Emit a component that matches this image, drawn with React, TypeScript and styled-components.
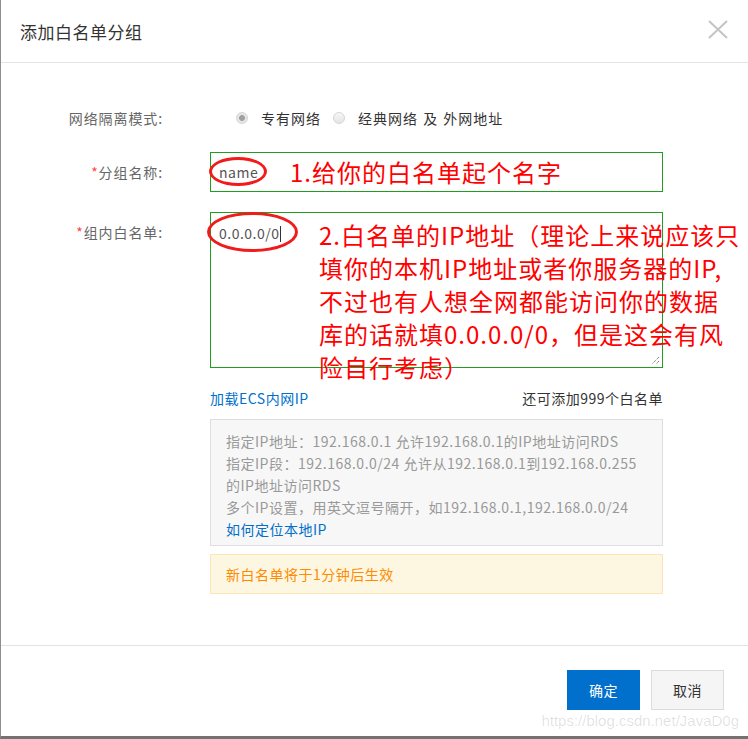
import React from 'react';
import styled, { createGlobalStyle } from 'styled-components';

const GlobalStyle = createGlobalStyle`
  html, body {
    margin: 0;
    padding: 0;
    background: #fff;
  }
  body {
    font-family: "Noto Sans CJK SC", "Noto Sans", sans-serif;
    color: #333;
  }
`;

const noteLines = [
  '2.白名单的IP地址（理论上来说应该只',
  '填你的本机IP地址或者你服务器的IP,',
  '不过也有人想全网都能访问你的数据',
  '库的话就填0.0.0.0/0，但是这会有风',
  '险自行考虑）',
];

const tips = [
  '指定IP地址：192.168.0.1 允许192.168.0.1的IP地址访问RDS',
  '指定IP段：192.168.0.0/24 允许从192.168.0.1到192.168.0.255',
  '的IP地址访问RDS',
  '多个IP设置，用英文逗号隔开，如192.168.0.1,192.168.0.0/24',
];

function App() {
  return (
    <>
      <GlobalStyle />
      <Dialog>
        <Header>
          <Title>添加白名单分组</Title>
          <Close aria-label="close">
            <svg width="20" height="19" viewBox="0 0 20 19">
              <path d="M1 1 L19 18 M19 1 L1 18" stroke="#c4c4c4" strokeWidth="2" fill="none" />
            </svg>
          </Close>
        </Header>

        <Body>
          <FormItem $top={44}>
            <Label $lh={22}>网络隔离模式:</Label>
            <RadioGroup>
              <RadioOption>
                <Radio $checked />
                <span>专有网络</span>
              </RadioOption>
              <RadioOption>
                <Radio />
                <span>经典网络 及 外网地址</span>
              </RadioOption>
            </RadioGroup>
          </FormItem>

          <FormItem $top={23}>
            <Label $lh={40}>
              <Star>*</Star>分组名称:
            </Label>
            <Control>
              <Input>name</Input>
              <Ring $left={-1} $top={5} $w={58} $h={29} />
              <Note $left={80} $top={3}>1.给你的白名单起个名字</Note>
            </Control>
          </FormItem>

          <FormItem $top={20}>
            <Label $lh={40}>
              <Star>*</Star>组内白名单:
            </Label>
            <Control>
              <TextArea>
                0.0.0.0/0<Caret />
                <Grip width="10" height="10" viewBox="0 0 10 10">
                  <path d="M9 2 L2 9 M9 6 L6 9" stroke="#555" strokeWidth="1" strokeDasharray="1 1" fill="none" />
                </Grip>
              </TextArea>
              <Ring $left={-3} $top={0} $w={91} $h={40} />
              <Note $left={109} $top={6}>
                {noteLines.map((line) => (
                  <NoteLine key={line}>{line}</NoteLine>
                ))}
              </Note>
            </Control>
          </FormItem>

          <Extra>
            <Link>加载ECS内网IP</Link>
            <Remain>还可添加999个白名单</Remain>
          </Extra>

          <InfoBox>
            {tips.map((t) => (
              <div key={t}>{t}</div>
            ))}
            <Link>如何定位本地IP</Link>
          </InfoBox>

          <WarnBox>新白名单将于1分钟后生效</WarnBox>
        </Body>

        <Footer>
          <Button $primary>确定</Button>
          <Button>取消</Button>
        </Footer>

        <Watermark>https://blog.csdn.net/JavaD0g</Watermark>
      </Dialog>
    </>
  );
}

export default App;

const Dialog = styled.div`
  position: relative;
  width: 748px;
  height: 739px;
  box-sizing: border-box;
  border-left: 1px solid #8e8e8e;
  border-bottom: 3px solid #727272;
  display: flex;
  flex-direction: column;
  overflow: hidden;
  background: #fff;
`;

const Header = styled.div`
  height: 62px;
  flex-shrink: 0;
  border-bottom: 1px solid #e3e3e3;
  display: flex;
  align-items: center;
  justify-content: space-between;
  padding: 0 20px 0 19px;
`;

const Title = styled.div`
  font-size: 17px;
  letter-spacing: 0.5px;
  color: #333;
  margin-top: 1px;
`;

const Close = styled.div`
  display: flex;
  margin-top: -4px;
`;

const Body = styled.div`
  flex: 1;
  display: flex;
  flex-direction: column;
  letter-spacing: 0.5px;
`;

const FormItem = styled.div<{ $top: number }>`
  display: grid;
  grid-template-columns: 162px 453px;
  column-gap: 47px;
  align-items: start;
  margin-top: ${(p) => p.$top}px;
`;

const Label = styled.div<{ $lh: number }>`
  text-align: right;
  font-size: 14px;
  letter-spacing: 0.9px;
  color: #666;
  line-height: ${(p) => p.$lh}px;
`;

const Star = styled.span`
  color: #f44;
`;

const RadioGroup = styled.div`
  display: flex;
  align-items: center;
  height: 22px;
  padding-left: 26px;
  gap: 12px;
  font-size: 14px;
  letter-spacing: 1px;
  color: #333;
`;

const RadioOption = styled.label`
  display: flex;
  align-items: center;
  gap: 13px;
  word-spacing: 1px;
`;

const Radio = styled.span<{ $checked?: boolean }>`
  width: 12px;
  height: 12px;
  box-sizing: border-box;
  border-radius: 50%;
  border: 1px solid #d6d6d6;
  background: ${(p) =>
    p.$checked
      ? 'radial-gradient(circle, #a0a0a0 0 2.6px, #e6e6e6 3.2px)'
      : 'linear-gradient(#f7f7f7, #e4e4e4)'};
`;

const Control = styled.div`
  position: relative;
`;

const Input = styled.div`
  height: 40px;
  box-sizing: border-box;
  border: 1px solid #1f9e1f;
  padding: 0 8px;
  display: flex;
  align-items: center;
  font-size: 14px;
  color: #555;
`;

const TextArea = styled.div`
  position: relative;
  height: 156px;
  box-sizing: border-box;
  border: 1px solid #1f9e1f;
  padding: 10px 8px;
  font-size: 14px;
  line-height: 20px;
  color: #555;
`;

const Caret = styled.span`
  display: inline-block;
  width: 1px;
  height: 16px;
  background: #333;
  vertical-align: -3px;
`;

const Grip = styled.svg`
  position: absolute;
  right: 2px;
  bottom: 2px;
`;

const Ring = styled.div<{ $left: number; $top: number; $w: number; $h: number }>`
  position: absolute;
  left: ${(p) => p.$left}px;
  top: ${(p) => p.$top}px;
  width: ${(p) => p.$w}px;
  height: ${(p) => p.$h}px;
  box-sizing: border-box;
  border: 3px solid #f21b1b;
  border-radius: 50%;
  pointer-events: none;
`;

const Note = styled.div<{ $left: number; $top: number }>`
  position: absolute;
  left: ${(p) => p.$left}px;
  top: ${(p) => p.$top}px;
  font-size: 24px;
  letter-spacing: 1px;
  line-height: 33px;
  color: #ff0000;
  white-space: nowrap;
  pointer-events: none;
`;

const NoteLine = styled.div``;

const Extra = styled.div`
  margin: 20px 0 0 209px;
  width: 453px;
  display: flex;
  justify-content: space-between;
  font-size: 14px;
  line-height: 20px;
`;

const Link = styled.span`
  color: #0070cc;
`;

const Remain = styled.span`
  color: #333;
`;

const InfoBox = styled.div`
  margin: 11px 0 0 209px;
  width: 453px;
  box-sizing: border-box;
  border: 1px solid #dedede;
  background: #f7f7f7;
  padding: 10px 15px 5px;
  font-size: 14px;
  line-height: 22px;
  color: #999;
`;

const WarnBox = styled.div`
  margin: 8px 0 0 209px;
  width: 453px;
  height: 40px;
  box-sizing: border-box;
  border: 1px solid #fbe5b4;
  background: #fdf7e2;
  padding: 0 15px;
  display: flex;
  align-items: center;
  font-size: 14px;
  color: #ff8a00;
`;

const Footer = styled.div`
  height: 91px;
  flex-shrink: 0;
  box-sizing: border-box;
  border-top: 1px solid #e3e3e3;
  display: flex;
  justify-content: flex-end;
  align-items: flex-start;
  gap: 11px;
  padding: 24px 24px 0 0;
`;

const Button = styled.div<{ $primary?: boolean }>`
  width: 73px;
  height: 40px;
  box-sizing: border-box;
  display: flex;
  align-items: center;
  justify-content: center;
  font-size: 14px;
  letter-spacing: 0.5px;
  border: 1px solid ${(p) => (p.$primary ? '#0070cc' : '#dcdcdc')};
  background: ${(p) => (p.$primary ? '#0070cc' : '#f5f5f5')};
  color: ${(p) => (p.$primary ? '#fff' : '#333')};
`;

const Watermark = styled.div`
  position: absolute;
  right: 9px;
  bottom: 7px;
  font-family: "Liberation Sans", Arial, sans-serif;
  font-size: 15px;
  color: rgba(0, 0, 0, 0.13);
  pointer-events: none;
`;
